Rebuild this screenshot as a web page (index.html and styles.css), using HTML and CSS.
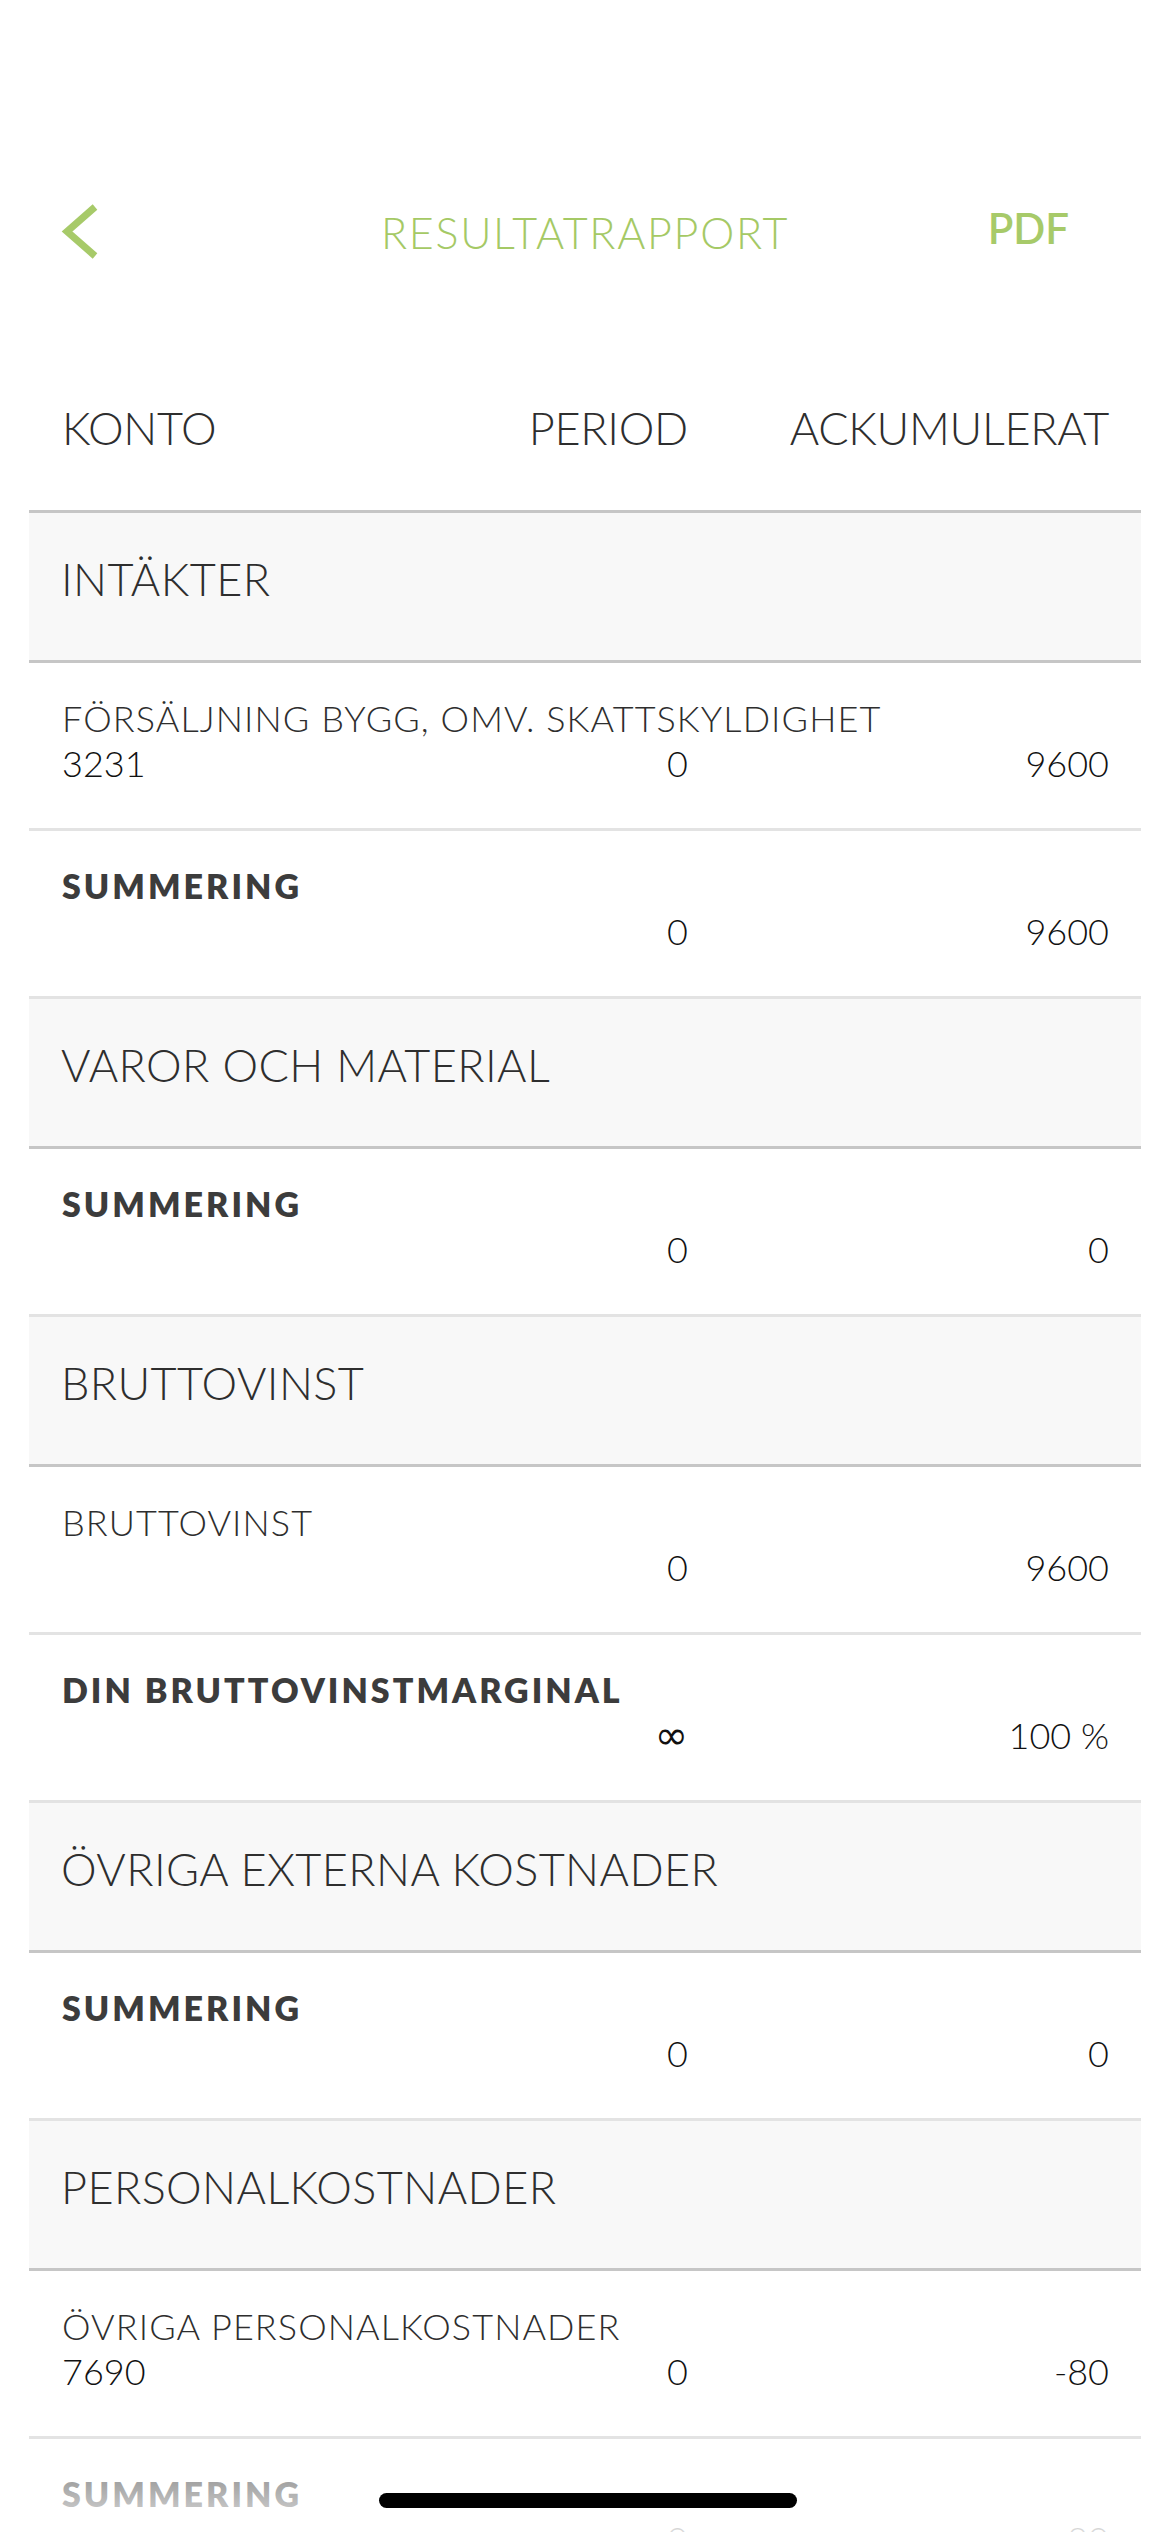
FILE: index.html
```html
<!DOCTYPE html>
<html lang="sv">
<head>
<meta charset="utf-8">
<title>Resultatrapport</title>
<link rel="stylesheet" href="styles.css">
</head>
<body>
<div class="screen">
  <header class="nav">
    <div class="nav-back">
      <svg class="chevron" width="45" height="66" viewBox="0 0 45 66"><polyline points="35,8 7,32.5 35,57" fill="none" stroke="#a7ca69" stroke-width="7"/></svg>
    </div>
    <div class="nav-title">RESULTATRAPPORT</div>
    <div class="nav-action">PDF</div>
  </header>

  <div class="table">
    <div class="cols">
      <div class="c-name">KONTO</div>
      <div class="c-num">PERIOD</div>
      <div class="c-num">ACKUMULERAT</div>
    </div>

    <div class="section">INTÄKTER</div>
    <div class="row">
      <div class="row-name">FÖRSÄLJNING BYGG, OMV. SKATTSKYLDIGHET</div>
      <div class="row-nums"><span>3231</span><span class="num">0</span><span class="num">9600</span></div>
    </div>
    <div class="row sum">
      <div class="row-name">SUMMERING</div>
      <div class="row-nums"><span></span><span class="num">0</span><span class="num">9600</span></div>
    </div>

    <div class="section">VAROR OCH MATERIAL</div>
    <div class="row sum">
      <div class="row-name">SUMMERING</div>
      <div class="row-nums"><span></span><span class="num">0</span><span class="num">0</span></div>
    </div>

    <div class="section">BRUTTOVINST</div>
    <div class="row">
      <div class="row-name">BRUTTOVINST</div>
      <div class="row-nums"><span></span><span class="num">0</span><span class="num">9600</span></div>
    </div>
    <div class="row sum">
      <div class="row-name">DIN BRUTTOVINSTMARGINAL</div>
      <div class="row-nums"><span></span><span class="num inf">∞</span><span class="num">100 %</span></div>
    </div>

    <div class="section">ÖVRIGA EXTERNA KOSTNADER</div>
    <div class="row sum">
      <div class="row-name">SUMMERING</div>
      <div class="row-nums"><span></span><span class="num">0</span><span class="num">0</span></div>
    </div>

    <div class="section">PERSONALKOSTNADER</div>
    <div class="row">
      <div class="row-name">ÖVRIGA PERSONALKOSTNADER</div>
      <div class="row-nums"><span>7690</span><span class="num">0</span><span class="num">-80</span></div>
    </div>
    <div class="row sum">
      <div class="row-name">SUMMERING</div>
      <div class="row-nums"><span></span><span class="num">0</span><span class="num">-80</span></div>
    </div>
  </div>

  <div class="fade"></div>
  <div class="home-bar"></div>
</div>
</body>
</html>
```

FILE: styles.css
```css
html, body {
  margin: 0;
  padding: 0;
  background: #ffffff;
}

body {
  font-family: "Lato", "Liberation Sans", sans-serif;
  font-weight: 300;
  color: #2e2e2e;
}

.screen {
  position: relative;
  width: 1170px;
  height: 2532px;
  overflow: hidden;
  background: #ffffff;
}

/* navigation bar */
.nav {
  display: grid;
  grid-template-columns: 1fr auto 1fr;
  align-items: center;
  height: 112px;
  padding: 176px 60px 0 60px;
}

.nav-back {
  width: 45px;
  height: 66px;
  display: flex;
}

.chevron {
  display: block;
}

.nav-title {
  font-size: 43px;
  line-height: 1;
  letter-spacing: 1.7px;
  color: #a5c965;
  font-weight: 300;
}

.nav-action {
  justify-self: end;
  font-size: 42px;
  line-height: 1;
  color: #a7ca69;
  font-weight: 600;
  margin: 0 41px 8px 0;
}

/* table */
.table {
  margin: 0 29px;
}

.cols {
  display: grid;
  grid-template-columns: 1fr 200px 421px;
  height: 104px;
  padding: 118px 32px 0 33px;
  border-bottom: 3px solid #c6c6c6;
  font-size: 45px;
  line-height: 1;
  letter-spacing: -0.3px;
  color: #2e2e2e;
}

.c-num {
  text-align: right;
}

.section {
  box-sizing: border-box;
  height: 150px;
  padding: 44px 32px 0 32px;
  background: #f8f8f8;
  border-bottom: 3px solid #c6c6c6;
  font-size: 45px;
  line-height: 1;
  letter-spacing: 0.4px;
  color: #2e2e2e;
}

.row {
  box-sizing: border-box;
  height: 168px;
  padding: 37px 32px 0 33px;
  border-bottom: 3px solid #e3e3e3;
  background: #ffffff;
}

.row-name {
  font-size: 36px;
  line-height: 36px;
  letter-spacing: 1.1px;
  color: #2e2e2e;
  white-space: nowrap;
}

.row.sum .row-name {
  font-size: 34px;
  font-weight: 800;
  letter-spacing: 3px;
  color: #3c3c3c;
}

.row-nums {
  display: grid;
  grid-template-columns: 1fr 200px 421px;
  margin-top: 9px;
  font-size: 36px;
  line-height: 36px;
  color: #111111;
}

.num {
  text-align: right;
  font-weight: 300;
}

.inf {
  font-family: "DejaVu Sans", sans-serif;
  font-size: 40px;
  font-weight: 400;
}

/* bottom fade and home indicator */
.fade {
  position: absolute;
  left: 0;
  right: 0;
  bottom: 0;
  height: 90px;
  background: linear-gradient(to bottom, rgba(255,255,255,0) 0%, rgba(255,255,255,0.5) 40%, rgba(255,255,255,0.85) 100%);
}

.home-bar {
  position: absolute;
  left: 379px;
  top: 2493px;
  width: 418px;
  height: 15px;
  border-radius: 8px;
  background: #000000;
}
```
